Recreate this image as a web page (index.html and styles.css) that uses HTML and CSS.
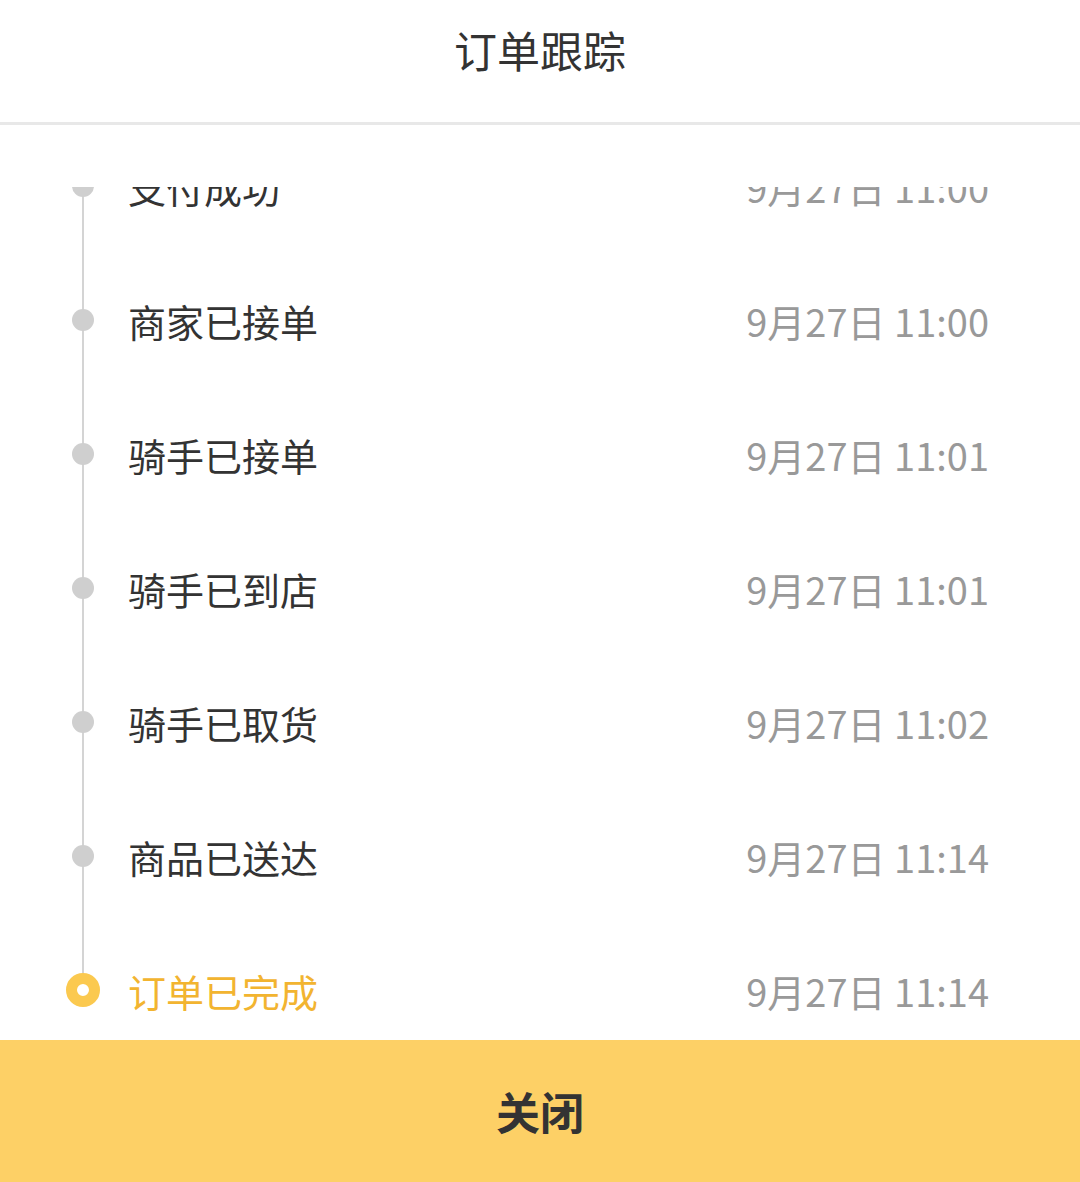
FILE: index.html
```html
<!DOCTYPE html>
<html lang="zh-CN">

<head>
    <meta charset="UTF-8">
    <meta name="viewport" content="width=device-width, initial-scale=1.0">
    <title>订单跟踪</title>
    <link rel="stylesheet" href="styles.css">
</head>

<body>
    <div class="sheet">
        <div class="sheet-header">订单跟踪</div>
        <div class="track">
            <ul class="track-list">
                <li class="track-item">
                    <span class="marker"></span>
                    <span class="status">支付成功</span>
                    <span class="time">9月27日 11:00</span>
                </li>
                <li class="track-item">
                    <span class="marker"></span>
                    <span class="status">商家已接单</span>
                    <span class="time">9月27日 11:00</span>
                </li>
                <li class="track-item">
                    <span class="marker"></span>
                    <span class="status">骑手已接单</span>
                    <span class="time">9月27日 11:01</span>
                </li>
                <li class="track-item">
                    <span class="marker"></span>
                    <span class="status">骑手已到店</span>
                    <span class="time">9月27日 11:01</span>
                </li>
                <li class="track-item">
                    <span class="marker"></span>
                    <span class="status">骑手已取货</span>
                    <span class="time">9月27日 11:02</span>
                </li>
                <li class="track-item">
                    <span class="marker"></span>
                    <span class="status">商品已送达</span>
                    <span class="time">9月27日 11:14</span>
                </li>
                <li class="track-item current">
                    <span class="marker"></span>
                    <span class="status">订单已完成</span>
                    <span class="time">9月27日 11:14</span>
                </li>
            </ul>
        </div>
        <button class="close-btn">关闭</button>
    </div>
</body>

</html>
```

FILE: styles.css
```css
body {
    margin: 0;
    font-family: "Noto Sans CJK SC", "Noto Sans", sans-serif;
    background: #fff;
    color: #333;
}

.sheet {
    display: flex;
    flex-direction: column;
    height: 100vh;
}

.sheet-header {
    height: 122px;
    line-height: 98px;
    text-align: center;
    font-size: 43px;
    color: #333;
    border-bottom: 3px solid #e8e8e8;
    flex-shrink: 0;
}

.track {
    flex: 1;
    margin-top: 62px;
    overflow: hidden;
}

.track-list {
    list-style: none;
    margin: -68px 0 0;
    padding: 0;
}

.track-item {
    display: flex;
    align-items: center;
    height: 134px;
    padding: 0 91px 0 72px;
    position: relative;
}

.marker {
    position: relative;
    width: 22px;
    height: 100%;
    flex-shrink: 0;
    margin-right: 34px;
}

.marker::before {
    content: "";
    position: absolute;
    left: 10px;
    top: 0;
    bottom: 0;
    width: 2px;
    background: #d4d4d4;
}

.marker::after {
    content: "";
    position: absolute;
    left: 0;
    top: 50%;
    width: 22px;
    height: 22px;
    margin-top: -11px;
    border-radius: 50%;
    background: #cfcfcf;
}

.current .marker::before {
    bottom: 50%;
}

.current .marker::after {
    left: -6px;
    width: 12px;
    height: 12px;
    margin-top: -17px;
    border: 11px solid #fbc94f;
    background: #fff;
}

.status {
    flex: 1;
    font-size: 38px;
    color: #333;
}

.time {
    font-size: 38px;
    color: #999;
}

.current .status {
    color: #f2b430;
}

.close-btn {
    flex-shrink: 0;
    height: 142px;
    border: none;
    background: #fdd066;
    font-family: inherit;
    font-size: 44px;
    font-weight: bold;
    color: #333;
    padding: 0;
}
```
